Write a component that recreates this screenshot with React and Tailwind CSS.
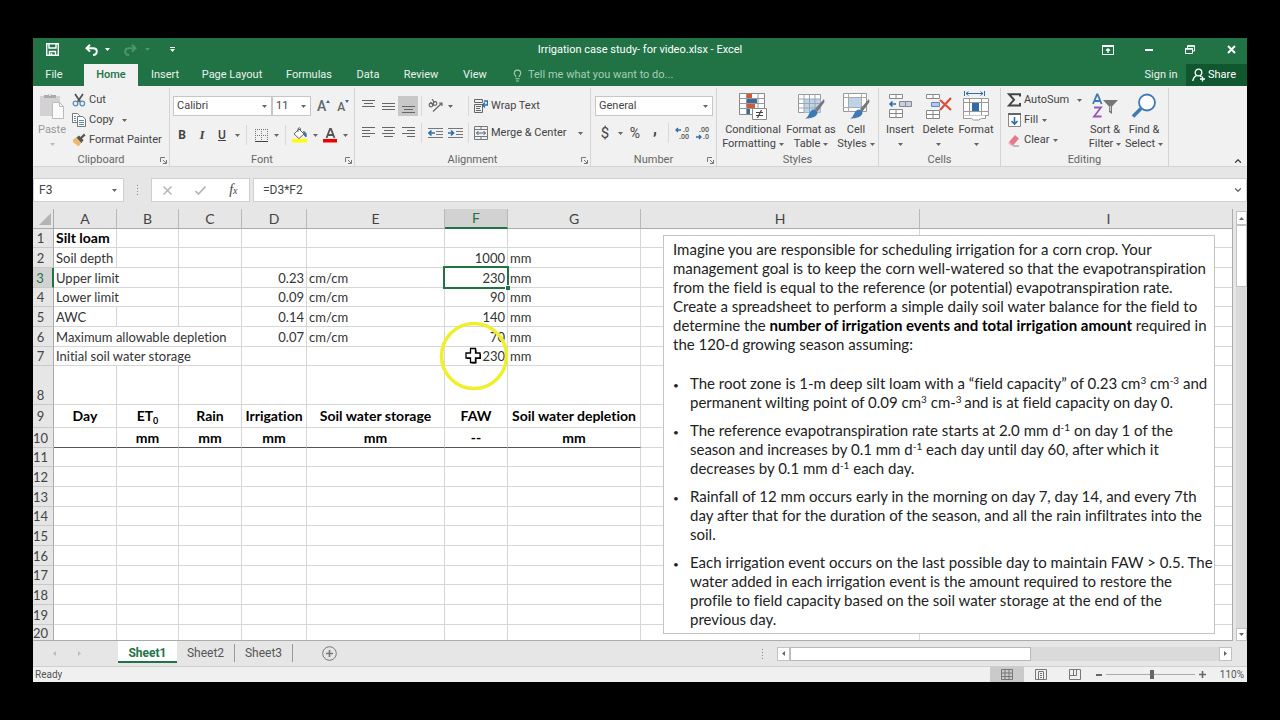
import { ChevronUp, ChevronDown, Lightbulb } from 'lucide-react';

const UI_FONT = "font-['Roboto','Noto_Sans',sans-serif]";
const CELL_FONT = "font-['Lato',sans-serif] [font-variant-ligatures:none]";

function Caret({ className = 'text-[#666]' }) {
  return (
    <svg width="5" height="3" viewBox="0 0 5 3" className={`shrink-0 ${className}`}>
      <path d="M0 0h5L2.5 3z" fill="currentColor" />
    </svg>
  );
}

function Launcher() {
  return (
    <svg width="7" height="7" viewBox="0 0 7 7" fill="none" stroke="#777">
      <path d="M.5 5V.5H5M3 3l3 3M6.500 3v3.500H3" />
    </svg>
  );
}

/* ---------- title bar ---------- */

function SaveIcon() {
  return (
    <svg width="13" height="13" viewBox="0 0 13 13" fill="none" stroke="#fff" strokeWidth="1.4">
      <path d="M.7.7h11.600v11.600H.7zM3 .7v4.300h7V.7M3.500 12V8.500h6V12" />
      <path d="M5.500 10v2" />
    </svg>
  );
}

function UndoIcon() {
  return (
    <svg width="13" height="12" viewBox="0 0 13 12" fill="none" stroke="currentColor" strokeWidth="2">
      <path d="M5 .8 1.500 4.200 5 7.600M1.800 4.200H8c2.500 0 3.800 1.300 3.800 3.200S10.500 10.800 8 11" />
    </svg>
  );
}

function TitleBar() {
  return (
    <div className="grid h-[26px] grid-cols-[1fr_auto_1fr] items-center pb-[3px] text-white">
      <div className="flex h-5 items-center pl-[13px]">
        <button aria-label="Save"><SaveIcon /></button>
        <button aria-label="Undo" className="ml-[26px] flex items-center gap-[7px]">
          <UndoIcon />
          <Caret className="text-white" />
        </button>
        <button aria-label="Redo" className="ml-[14px] flex items-center gap-[8px] text-[#4f946b]">
          <span className="-scale-x-100"><UndoIcon /></span>
          <Caret className="text-[#4f946b]" />
        </button>
        <button aria-label="Customize Quick Access Toolbar" className="ml-5 flex flex-col items-center gap-px">
          <span className="h-px w-[5px] bg-white" />
          <Caret className="text-white" />
        </button>
      </div>
      <h1 className="text-[11px]/[16px]">Irrigation case study- for video.xlsx - Excel</h1>
      <div className="flex h-5 items-center justify-end gap-[9px]">
        <button aria-label="Ribbon Display Options" className="flex w-8 justify-center">
          <svg width="12" height="10" viewBox="0 0 12 10" fill="none" stroke="#fff">
            <path d="M.5 1.500h11v8H.5z" />
            <path d="M0 1h12" strokeWidth="2" />
            <path d="M6 4v4M4 5.500 6 3.800l2 1.700" strokeWidth="1.300" />
          </svg>
        </button>
        <button aria-label="Minimize" className="flex w-8 justify-center">
          <span className="h-[2px] w-2 bg-white" />
        </button>
        <button aria-label="Restore" className="flex w-8 justify-center">
          <svg width="10" height="9" viewBox="0 0 10 9" fill="none" stroke="#fff">
            <path d="M2.500 3V1h7v5H7.500M.5 3.500h7v5h-7z" />
            <path d="M2 1h8M0 4h8" strokeWidth="1.600" />
          </svg>
        </button>
        <button aria-label="Close" className="flex w-8 justify-center">
          <svg width="9" height="9" viewBox="0 0 9 9" stroke="#fff" strokeWidth="2">
            <path d="m1 1 7 7M8 1 1 8" />
          </svg>
        </button>
      </div>
    </div>
  );
}

function TabBar() {
  return (
    <div className="flex h-[22px] items-stretch text-[11px]/[16px] text-[#e9f2ec]">
      <button className="mr-[9px] w-[42px]">File</button>
      <button className="w-[54px] bg-[#f1f1f1] font-medium text-[#217346]">Home</button>
      <button className="w-[54px]">Insert</button>
      <button className="w-20">Page Layout</button>
      <button className="w-[74px]">Formulas</button>
      <button className="w-11">Data</button>
      <button className="w-[62px]">Review</button>
      <button className="w-[46px]">View</button>
      <label className="ml-[13px] flex flex-1 items-center gap-1 text-[#a5cdb5]">
        <Lightbulb size={13} />
        <input
          aria-label="Tell me what you want to do"
          placeholder="Tell me what you want to do..."
          className="w-44 bg-transparent outline-none placeholder:text-[#a5cdb5]"
        />
      </label>
      <button className="w-[50px]">Sign in</button>
      <button className="flex w-[61px] items-center gap-[2px] bg-[#10562f] pl-[6px] text-white">
        <svg width="14" height="14" viewBox="0 0 14 14" fill="none" stroke="#fff" strokeWidth="1.300">
          <circle cx="6.500" cy="4.500" r="3.300" />
          <path d="M4.500 7.500C2.500 8.500 1.200 10 .8 13M8 8l1.500 1M10.500 8.500v5M8 11h5" />
        </svg>
        Share
      </button>
    </div>
  );
}

/* ---------- ribbon icons ---------- */

function PasteIcon() {
  return (
    <svg width="26" height="28" viewBox="0 0 26 28">
      <path d="M1 4h20v20H1z" fill="#d3d1d3" />
      <path d="M5 6V3h4a2.500 2.500 0 0 1 4 0h4v3z" fill="#aaa" />
      <circle cx="11" cy="3" r="1" fill="#f1f1f1" />
      <path d="M13.500 10.500h7l4 4v12h-11z" fill="#fbfbfb" stroke="#bbb" />
      <path d="M20.500 10.500v4h4" fill="none" stroke="#bbb" />
    </svg>
  );
}

function CutIcon() {
  return (
    <svg width="14" height="14" viewBox="0 0 14 14" fill="none">
      <path d="M3 1l5.500 8M11 1 5.500 9" stroke="#555" strokeWidth="1.800" />
      <circle cx="3.500" cy="10.500" r="2.300" stroke="#5a8fbd" strokeWidth="1.300" />
      <circle cx="10.300" cy="10.500" r="2.300" stroke="#5a8fbd" strokeWidth="1.300" />
    </svg>
  );
}

function CopyIcon() {
  return (
    <svg width="14" height="14" viewBox="0 0 14 14" fill="#fff" stroke="#777">
      <path d="M.5.500h5l2 2v7h-7z" />
      <path d="M2 3.500h2M2 5.500h2M2 7.500h2" stroke="#5a8fbd" />
      <path d="M5.500 3.500h5l3 2.500v7.500h-8z" />
      <path d="M7 7.500h5M7 9.500h5M7 11.500h5" stroke="#5a8fbd" />
    </svg>
  );
}

function PainterIcon() {
  return (
    <svg width="14" height="14" viewBox="0 0 14 14">
      <path d="M1 6.500 5 4l5 5-3.500 4.500L1 9z" fill="#e9b872" />
      <path d="m4.500 4.500 2.500-2 1.500 1.500L12 .5l1.500 2-3.500 3 1.500 1.500-2 3z" fill="#555" />
    </svg>
  );
}

function BordersIcon() {
  return (
    <svg width="13" height="13" viewBox="0 0 13 13" fill="none" stroke="#777">
      <path d="M0 .5h13M0 6.500h13M.5 0v12M6.500 0v12M12.500 0v12" strokeDasharray="1 1" />
      <path d="M0 12.500h13" stroke="#444" />
    </svg>
  );
}

function FillColorIcon() {
  return (
    <svg width="16" height="16" viewBox="0 0 16 16">
      <path d="m2 7 5-5 5 5-5 4.500z" fill="#fff" stroke="#666" />
      <path d="M6 5V1.500q1.500-1.500 2.500 0V4" fill="none" stroke="#666" />
      <path d="M11.500 4.500q3.500 1 2.500 5.500-2-1-1.500-3z" fill="#3f6fa3" stroke="#3f6fa3" />
      <path d="M0 12h15v3.500H0z" fill="#ff0" />
    </svg>
  );
}

function FontColorIcon() {
  return (
    <svg width="15" height="16" viewBox="0 0 15 16">
      <path d="m3.500 11 3.500-9h1l3.500 9M5 8h5" fill="none" stroke="#555" strokeWidth="1.800" />
      <path d="M0 12h14v3.500H0z" fill="#e00" />
    </svg>
  );
}

// each entry in rows is [x, width] of one text line in a 13px wide paragraph
function LinesIcon({ rows, top = 1, step = 3 }) {
  return (
    <svg width="13" height="14" viewBox="0 0 13 14" fill="#666">
      {rows.map(([x, w], i) => (
        <rect key={i} x={x} y={top + i * step} width={w} height="1" />
      ))}
    </svg>
  );
}

function IndentIcon({ increase }) {
  return (
    <svg width="15" height="13" viewBox="0 0 15 13" fill="none">
      <path d="M0 1.500h15M8 4.500h7M8 7.500h7M0 10.500h15" stroke="#777" />
      <path d={increase ? 'M0 6h5M3 3.500 5.500 6 3 8.500' : 'M1 6h6M3.500 3.500 1 6l2.500 2.500'} stroke="#2e6ea8" strokeWidth="1.600" />
    </svg>
  );
}

function OrientationIcon() {
  return (
    <svg width="15" height="14" viewBox="0 0 15 14" fill="none" stroke="#666" strokeWidth="1.200">
      <circle cx="3" cy="6" r="1.800" />
      <path d="m2.500 3 3 3.800" />
      <circle cx="7" cy="4.500" r="1.800" />
      <path d="m4 0 2.500 3.500M5 12.500l9-8.500M14 7V4h-3" />
    </svg>
  );
}

function WrapIcon() {
  return (
    <svg width="14" height="15" viewBox="0 0 14 15" fill="none" stroke="#666">
      <path d="M.5.500h8v3h-8zM.5 5.500h8v8h-8z" />
      <path d="M2 7.500h5M2 9.500h4M2 11.500h5" />
      <path d="M10 2h3.500v4H9M11 3.500 8.500 6 11 8.500" stroke="#2e6ea8" strokeWidth="1.300" />
    </svg>
  );
}

function MergeIcon() {
  return (
    <svg width="14" height="14" viewBox="0 0 14 14" fill="none" stroke="#777">
      <path d="M.5.500h13v13H.5zM.5 3.500h13M.5 10.500h13M7 .5v3M7 10.500v3" />
      <path d="M2.500 7h9M4.500 5l-2 2 2 2M9.500 5l2 2-2 2" stroke="#41617f" />
    </svg>
  );
}

function DecimalIcon({ increase }) {
  return (
    <svg width="15" height="14" viewBox="0 0 15 14" className="font-['Open_Sans',sans-serif] text-[7px] font-semibold">
      <text x={increase ? 8 : 4} y="6" fill="#555">{increase ? '.0' : '.00'}</text>
      <text x={increase ? 4 : 8} y="13" fill="#555">{increase ? '.00' : '.0'}</text>
      <path
        d={increase ? 'M1 4h5M3 2 1 4l2 2' : 'M1 11h5M4 9l2 2-2 2'}
        fill="none"
        stroke="#2e6ea8"
        strokeWidth="1.300"
      />
    </svg>
  );
}

function CondIcon() {
  return (
    <svg width="28" height="28" viewBox="0 0 28 28">
      <path d="M.5 1.500h25v21H.5z" fill="#fff" stroke="#888" />
      <path d="M.5 6.500h25M.5 11.500h25M.5 16.500h25M7.500 1.500v21M19 1.500v21" stroke="#999" fill="none" />
      <path d="M8 2h5v4H8zM8 12h8v4H8z" fill="#d2583a" />
      <path d="M8 7h10v4H8zM8 17h3v5H8z" fill="#3e6b9c" />
      <path d="M13.500 16.500h14v11h-14z" fill="#fff" stroke="#888" />
      <path d="M17 20.500h7M17 23.500h7M18.500 26l4-8" stroke="#444" strokeWidth="1.200" fill="none" />
    </svg>
  );
}

function Brush() {
  return (
    <>
      <path d="m27 7-9 10 2.500 2.500L27.500 10z" fill="#777" />
      <path d="M16.500 17.500q4 0 4 4-2 5-12.500 5 3-1.500 4-4.500 1.500-4 4.500-4.500z" fill="#3e7ab5" />
    </>
  );
}

function FormatTableIcon() {
  return (
    <svg width="28" height="28" viewBox="0 0 28 28">
      <path d="M1.500 2.500h22v18h-22z" fill="#fff" stroke="#999" />
      <path d="M7 7h16.500v13.500H7z" fill="#bcd3e8" />
      <path d="M1.500 7h22M1.500 11.500h22M1.500 16h22M7 2.500v18M12.500 2.500v18M18 2.500v18" stroke="#9aa7b3" fill="none" />
      <Brush />
    </svg>
  );
}

function CellStylesIcon() {
  return (
    <svg width="28" height="28" viewBox="0 0 28 28">
      <path d="M1.500 1.500h23v18h-23z" fill="#fff" stroke="#999" />
      <path d="M1.500 5.500h23M1.500 15.500h23M6.500 1.500v18M19.500 1.500v18" stroke="#aaa" fill="none" />
      <path d="M7 6h12v9H7z" fill="#bcd3e8" />
      <Brush />
    </svg>
  );
}

function InsertIcon() {
  return (
    <svg width="26" height="28" viewBox="0 0 26 28" fill="#fff" stroke="#888">
      <path d="M2.500 2.500h13v4h-13zM9 2.500v4M2.500 17.500h13v8h-13zM9 17.500v8M2.500 21.500h13" />
      <path d="M12.500 9.500h12v5h-12zM18.500 9.500v5" fill="#c5cfe3" />
      <path d="M3 12h6M5.500 9.500 3 12l2.500 2.500" stroke="#2e6ea8" strokeWidth="1.600" fill="none" />
    </svg>
  );
}

function DeleteIcon() {
  return (
    <svg width="28" height="28" viewBox="0 0 28 28" fill="#fff" stroke="#888">
      <path d="M2.500 2.500h13v4h-13zM9 2.500v4M2.500 18.500h13v8h-13zM9 18.500v8M2.500 22.500h13" />
      <path d="M7.500 10.500h8v4h-8z" fill="#b6c8e6" stroke="#6787b5" />
      <path d="m16 8 11 10M27 6 16 18" stroke="#d8513a" strokeWidth="2.200" />
    </svg>
  );
}

function FormatIcon() {
  return (
    <svg width="28" height="30" viewBox="0 0 28 30" fill="#fff" stroke="#999">
      <path d="M1.500 7.500h25v17h-25z" />
      <path d="M1.500 11.500h25M1.500 20.500h25M7.500 7.500v17M19.500 7.500v17" />
      <path d="M10 12h7v8h-7z" fill="#2e6ea8" stroke="none" />
      <path d="M1.500 24.500v3h8l2 1.500h5l3-1.500h4v-3" />
      <path d="M2.500 0v5M22.500 0v5M4 2.500h17M6.500.5l-2.500 2 2.500 2M18.500.5l2.500 2-2.500 2" stroke="#2e6ea8" fill="none" />
    </svg>
  );
}

function SigmaIcon() {
  return (
    <svg width="14" height="14" viewBox="0 0 14 14" fill="none" stroke="#444" strokeWidth="2">
      <path d="M13 3.500V1.200H2l5 5.600-5 5.600h11v-2.300" />
    </svg>
  );
}

function FillIcon() {
  return (
    <svg width="13" height="14" viewBox="0 0 13 14" fill="#fff" stroke="#888">
      <path d="M.5 1.500h12v12H.5z" />
      <path d="M0 1h13" stroke="#666" strokeWidth="2" />
      <path d="M6.500 4v7M3.500 8l3 3 3-3" stroke="#2e6ea8" strokeWidth="1.600" fill="none" />
    </svg>
  );
}

function ClearIcon() {
  return (
    <svg width="14" height="13" viewBox="0 0 14 13">
      <path d="m2 8 6-7 4 3.500-6 7H4z" fill="#e8798c" />
      <path d="m2 8 4 3.500L4.500 12 1 9.500z" fill="#f4b9c3" />
      <path d="M6 12h6" stroke="#888" />
    </svg>
  );
}

function SortIcon() {
  return (
    <svg width="28" height="28" viewBox="0 0 28 28" fill="none">
      <path d="m2 12 4-9.500h.6l4 9.500M3.500 9h6" stroke="#3e7ab5" strokeWidth="1.800" />
      <path d="M3 15.500h7L3 24.500h7.500" stroke="#9659b5" strokeWidth="1.800" />
      <path d="M12 8h15l-6 6.500V22l-3-2v-5.500z" fill="#777" />
      <path d="M19.300 14v5" stroke="#ddd" />
    </svg>
  );
}

function FindIcon() {
  return (
    <svg width="26" height="26" viewBox="0 0 26 26" fill="none" stroke="#3e7ab5">
      <circle cx="16" cy="9.500" r="8" fill="#fff" strokeWidth="1.800" />
      <path d="M10 15.500 2 23.500" strokeWidth="3.500" />
    </svg>
  );
}

/* ---------- ribbon ---------- */

function Group({ label, width, launcher, children }) {
  return (
    <section className={`flex shrink-0 flex-col border-r border-[#d4d4d4] ${width}`}>
      <div className="h-[65px] px-[2px]">{children}</div>
      <div className="grid h-[13px] grid-cols-[12px_1fr_12px] items-center text-[#666]">
        <span className="col-start-2 text-center">{label}</span>
        {launcher && <button aria-label={`${label} settings`} className="flex justify-center"><Launcher /></button>}
      </div>
    </section>
  );
}

function BigButton({ icon, lines, width, disabled, caretBelow }) {
  return (
    <button className={`flex shrink-0 flex-col items-center leading-[14px] ${width} ${disabled ? 'text-[#999]' : ''}`}>
      <span className="flex h-[35px] items-center justify-center">{icon}</span>
      <span className="whitespace-nowrap">{lines[0]}</span>
      <span className="flex h-[14px] items-center gap-[3px] whitespace-nowrap">
        {!caretBelow && lines[1]}
        <Caret className={disabled ? 'text-[#bbb]' : 'text-[#666]'} />
      </span>
    </button>
  );
}

function SmallButton({ icon, label, caret, gap = 'gap-1' }) {
  return (
    <button className={`flex h-5 items-center whitespace-nowrap ${gap}`}>
      <span className="flex items-center gap-[3px]">
        <span className="flex w-[14px] justify-center">{icon}</span>
        {label}
      </span>
      {caret && <Caret />}
    </button>
  );
}

function Tool({ label, children, active }) {
  return (
    <button aria-label={label} className={`flex h-5 w-5 shrink-0 items-center justify-center ${active ? 'bg-[#c8c8c8]' : ''}`}>
      {children}
    </button>
  );
}

function CaretButton({ label }) {
  return (
    <button aria-label={label} className="flex h-5 w-[10px] shrink-0 items-center justify-center">
      <Caret />
    </button>
  );
}

function Divider({ className = 'mx-1' }) {
  return <span className={`h-5 w-px shrink-0 bg-[#d9d9d9] ${className}`} />;
}

function Combo({ label, value, width }) {
  return (
    <span className={`relative h-5 shrink-0 border border-[#c6c6c6] bg-white ${width}`}>
      <select aria-label={label} className="block h-full w-full appearance-none pl-[3px] outline-none">
        <option>{value}</option>
      </select>
      <span className="pointer-events-none absolute top-2 right-1"><Caret /></span>
    </span>
  );
}

function Ribbon() {
  return (
    <div className="flex h-[81px] border-b border-[#d4d4d4] bg-[#f1f1f1] pt-[2px] text-[11px]/[14px] text-[#444]">
      <Group label="Clipboard" width="w-[137px]" launcher>
        <div className="flex">
          <BigButton icon={<PasteIcon />} lines={['Paste']} width="w-[34px]" disabled caretBelow />
          <div className="ml-[3px] pt-[2px]">
            <SmallButton icon={<CutIcon />} label="Cut" />
            <SmallButton icon={<CopyIcon />} label="Copy" caret gap="gap-2" />
            <SmallButton icon={<PainterIcon />} label="Format Painter" />
          </div>
        </div>
      </Group>
      <Group label="Font" width="w-[185px]" launcher>
        <div className="flex pt-2 pl-px">
          <Combo label="Font name" value="Calibri" width="w-[99px]" />
          <Combo label="Font size" value="11" width="w-[39px]" />
          <button aria-label="Increase font size" className="ml-[6px] flex text-[14px]/[20px] font-medium text-[#666]">
            A
            <svg width="4" height="3" viewBox="0 0 4 3" className="mt-1"><path d="M0 3 2 0l2 3z" fill="#2e6ea8" /></svg>
          </button>
          <button aria-label="Decrease font size" className="ml-[7px] flex text-[12px]/[22px] font-medium text-[#666]">
            A
            <svg width="4" height="3" viewBox="0 0 4 3" className="mt-1"><path d="M0 0h4L2 3z" fill="#2e6ea8" /></svg>
          </button>
        </div>
        <div className="flex items-center pt-[7px]">
          <Tool label="Bold"><b className="text-[12px]">B</b></Tool>
          <Tool label="Italic"><i className="font-['Liberation_Serif',serif] text-[13px] font-bold">I</i></Tool>
          <Tool label="Underline"><span className="text-[12px] font-medium underline">U</span></Tool>
          <CaretButton label="Underline style" />
          <Divider />
          <Tool label="Borders"><BordersIcon /></Tool>
          <CaretButton label="Border style" />
          <Divider />
          <Tool label="Fill color"><FillColorIcon /></Tool>
          <CaretButton label="Fill colors" />
          <Tool label="Font color"><FontColorIcon /></Tool>
          <CaretButton label="Font colors" />
        </div>
      </Group>
      <Group label="Alignment" width="w-[236px]" launcher>
        <div className="flex items-center pt-2 pl-px">
          <Tool label="Top align"><LinesIcon rows={[[0, 13], [2, 9], [0, 13]]} /></Tool>
          <Tool label="Middle align"><LinesIcon rows={[[0, 13], [0, 13], [0, 13]]} top={4} /></Tool>
          <Tool label="Bottom align" active><LinesIcon rows={[[0, 13], [2, 9], [0, 13]]} top={7} /></Tool>
          <Divider className="mx-[3px]" />
          <Tool label="Orientation"><OrientationIcon /></Tool>
          <CaretButton label="Orientation menu" />
          <Divider className="mr-[5px] ml-[13px]" />
          <SmallButton icon={<WrapIcon />} label="Wrap Text" />
        </div>
        <div className="flex items-center pt-[7px] pl-px">
          <Tool label="Align left"><LinesIcon rows={[[0, 13], [0, 8], [0, 13], [0, 8]]} /></Tool>
          <Tool label="Center"><LinesIcon rows={[[0, 13], [2, 9], [0, 13], [2, 9]]} /></Tool>
          <Tool label="Align right"><LinesIcon rows={[[0, 13], [5, 8], [0, 13], [5, 8]]} /></Tool>
          <Divider className="mx-[3px]" />
          <Tool label="Decrease indent"><IndentIcon /></Tool>
          <Tool label="Increase indent"><IndentIcon increase /></Tool>
          <Divider className="mr-[5px] ml-[3px]" />
          <SmallButton icon={<MergeIcon />} label="Merge & Center" caret gap="gap-[11px]" />
        </div>
      </Group>
      <Group label="Number" width="w-[126px]" launcher>
        <div className="flex pt-2 pl-[2px]">
          <Combo label="Number format" value="General" width="w-[118px]" />
        </div>
        <div className="flex items-center pt-[7px] pl-[2px]">
          <Tool label="Currency"><span className="text-[15px]">$</span></Tool>
          <CaretButton label="Currency menu" />
          <Tool label="Percent"><span className="text-[14px]">%</span></Tool>
          <Tool label="Comma style"><b className="pb-2 text-[16px]/[8px]">,</b></Tool>
          <Divider className="mx-[3px]" />
          <Tool label="Increase decimal"><DecimalIcon increase /></Tool>
          <Tool label="Decrease decimal"><DecimalIcon /></Tool>
        </div>
      </Group>
      <Group label="Styles" width="w-[162px]">
        <div className="flex">
          <BigButton icon={<CondIcon />} lines={['Conditional', 'Formatting']} width="w-[68px]" />
          <BigButton icon={<FormatTableIcon />} lines={['Format as', 'Table']} width="w-[48px]" />
          <BigButton icon={<CellStylesIcon />} lines={['Cell', 'Styles']} width="w-[42px]" />
        </div>
      </Group>
      <Group label="Cells" width="w-[122px]">
        <div className="flex">
          <BigButton icon={<InsertIcon />} lines={['Insert']} width="w-[38px]" caretBelow />
          <BigButton icon={<DeleteIcon />} lines={['Delete']} width="w-[38px]" caretBelow />
          <BigButton icon={<FormatIcon />} lines={['Format']} width="w-[38px]" caretBelow />
        </div>
      </Group>
      <Group label="Editing" width="w-[168px]">
        <div className="flex pl-1">
          <div className="w-[79px] pt-[2px]">
            <SmallButton icon={<SigmaIcon />} label="AutoSum" caret gap="gap-2" />
            <SmallButton icon={<FillIcon />} label="Fill" caret />
            <SmallButton icon={<ClearIcon />} label="Clear" caret />
          </div>
          <BigButton icon={<SortIcon />} lines={['Sort &', 'Filter']} width="w-[38px]" />
          <BigButton icon={<FindIcon />} lines={['Find &', 'Select']} width="w-[40px]" />
        </div>
      </Group>
      <div className="flex flex-1 items-end justify-end pr-1">
        <button aria-label="Collapse ribbon"><ChevronUp size={10} strokeWidth={3} /></button>
      </div>
    </div>
  );
}

function Dots() {
  return (
    <span className="flex flex-col gap-[2px]">
      <span className="h-px w-px bg-[#888]" />
      <span className="h-px w-px bg-[#888]" />
      <span className="h-px w-px bg-[#888]" />
      <span className="h-px w-px bg-[#888]" />
    </span>
  );
}

function FormulaBar() {
  return (
    <div className="flex h-[42px] items-center pt-1 text-[12px]/[16px] text-[#444]">
      <div className="flex h-6 w-[91px] items-center border border-[#d0d0d0] bg-white pr-[6px] pl-[5px]">
        <input aria-label="Name box" defaultValue="F3" className="w-full outline-none" />
        <Caret />
      </div>
      <span className="flex w-[27px] justify-center"><Dots /></span>
      <div className="flex h-6 w-[99px] items-center justify-around border border-[#d0d0d0] bg-white">
        <button aria-label="Cancel">
          <svg width="9" height="9" viewBox="0 0 9 9" stroke="#b5b5b5" strokeWidth="1.500"><path d="m.5.500 8 8M8.500.500l-8 8" /></svg>
        </button>
        <button aria-label="Enter">
          <svg width="11" height="9" viewBox="0 0 11 9" fill="none" stroke="#b5b5b5" strokeWidth="1.700"><path d="m.5 5 3 3L10.500.500" /></svg>
        </button>
        <button aria-label="Insert function" className="font-['Liberation_Serif',serif] text-[14px] italic">
          f<span className="text-[10px]">x</span>
        </button>
      </div>
      <div className="ml-[3px] flex h-6 flex-1 items-center border border-[#d0d0d0] bg-white pr-[3px] pl-[9px]">
        <input aria-label="Formula" defaultValue="=D3*F2" className="flex-1 outline-none" />
        <ChevronDown size={10} strokeWidth={3} className="text-[#666]" />
      </div>
    </div>
  );
}

/* ---------- sheet ---------- */

const COLUMNS = [
  { name: 'A', width: 'w-[63px]' },
  { name: 'B', width: 'w-[62px]' },
  { name: 'C', width: 'w-[63px]' },
  { name: 'D', width: 'w-[65px]' },
  { name: 'E', width: 'w-[138px]' },
  { name: 'F', width: 'w-[63px]' },
  { name: 'G', width: 'w-[133px]' },
  { name: 'H', width: 'w-[279px]' },
  { name: 'I', width: '' },
];

const H19 = 'h-[19px]';
const H20 = 'h-[20px]';

// long labels spill over the empty cells on their right, so they carry a span
const ROWS = [
  { height: H19, cells: { A: { text: 'Silt loam', bold: true } } },
  { height: H20, cells: { A: { text: 'Soil depth' }, F: { text: '1000', align: 'text-right' }, G: { text: 'mm' } } },
  { height: H20, cells: { A: { text: 'Upper limit', span: 2 }, D: { text: '0.23', align: 'text-right' }, E: { text: 'cm/cm' }, F: { text: '230', align: 'text-right', selected: true }, G: { text: 'mm' } } },
  { height: H19, cells: { A: { text: 'Lower limit', span: 2 }, D: { text: '0.09', align: 'text-right' }, E: { text: 'cm/cm' }, F: { text: '90', align: 'text-right' }, G: { text: 'mm' } } },
  { height: H20, cells: { A: { text: 'AWC' }, D: { text: '0.14', align: 'text-right' }, E: { text: 'cm/cm' }, F: { text: '140', align: 'text-right' }, G: { text: 'mm' } } },
  { height: H20, cells: { A: { text: 'Maximum allowable depletion', span: 3 }, D: { text: '0.07', align: 'text-right' }, E: { text: 'cm/cm' }, F: { text: '70', align: 'text-right' }, G: { text: 'mm' } } },
  { height: H19, cells: { A: { text: 'Initial soil water storage', span: 3 }, F: { text: '230', align: 'text-right' }, G: { text: 'mm' } } },
  { height: 'h-[39px]', cells: {} },
  {
    height: 'h-[23px]',
    middle: true,
    cells: {
      A: { text: 'Day', bold: true, align: 'text-center' },
      B: { text: <>ET<sub className="bottom-[-3px] text-[9px]">0</sub></>, bold: true, align: 'text-center' },
      C: { text: 'Rain', bold: true, align: 'text-center' },
      D: { text: 'Irrigation', bold: true, align: 'text-center' },
      E: { text: 'Soil water storage', bold: true, align: 'text-center' },
      F: { text: 'FAW', bold: true, align: 'text-center' },
      G: { text: 'Soil water depletion', bold: true, align: 'text-center' },
    },
  },
  {
    height: H20,
    ruled: true,
    cells: {
      B: { text: 'mm', bold: true, align: 'text-center' },
      C: { text: 'mm', bold: true, align: 'text-center' },
      D: { text: 'mm', bold: true, align: 'text-center' },
      E: { text: 'mm', bold: true, align: 'text-center' },
      F: { text: '--', bold: true, align: 'text-center' },
      G: { text: 'mm', bold: true, align: 'text-center' },
    },
  },
  ...[H19, H20, H20, H19, H20, H20, H19, H20, H20].map((height) => ({ height, cells: {} })),
  { height: 'h-4 leading-[16px]', cells: {} },
];

function Row({ row, number }) {
  const valign = row.middle ? 'align-middle' : 'align-bottom';
  const tds = [];
  for (let i = 0; i < COLUMNS.length; i++) {
    const { name } = COLUMNS[i];
    const cell = row.cells[name] || {};
    const ruled = row.ruled && i < 7;
    tds.push(
      <td
        key={name}
        colSpan={cell.span}
        className={`border-r border-b border-r-[#d6d6d6] px-[2px] py-0 whitespace-nowrap ${valign} ${ruled ? 'border-b-[#555]' : 'border-b-[#d6d6d6]'} ${cell.bold ? 'text-[14px] font-bold text-black' : ''} ${cell.selected ? 'relative' : ''} ${cell.align || ''}`}
      >
        {cell.text}
        {cell.selected && (
          <span className="absolute -top-[2px] -right-[2px] -bottom-[2px] -left-[2px] border-2 border-[#217346]">
            <span className="absolute -right-[3px] -bottom-[3px] h-[5px] w-[5px] border-t border-l border-white bg-[#217346]" />
          </span>
        )}
      </td>
    );
    if (cell.span) i += cell.span - 1;
  }
  const current = number === 3;
  return (
    <tr className={row.height}>
      <th
        scope="row"
        className={`border-r border-b border-b-[#c8c8c8] py-0 pr-[5px] pl-0 text-center font-normal ${valign} ${current ? 'border-r-2 border-r-[#217346] bg-[#d2d2d2] text-[#217346]' : 'border-r-[#ababab] bg-[#e6e6e6] text-[#444]'}`}
      >
        {number}
      </th>
      {tds}
    </tr>
  );
}

const BULLET = "before:-ml-[17px] before:inline-block before:w-[17px] before:text-[10px]/[8px] before:content-['•']";

function TaskNote() {
  return (
    <div className={`absolute top-[26px] left-[630px] w-[552px] border border-[#c4c4c4] bg-white px-[9px] py-1 text-[15px]/[19px] whitespace-nowrap text-[#222] ${CELL_FONT}`}>
      <p>
        Imagine you are responsible for scheduling irrigation for a corn crop. Your<br />
        management goal is to keep the corn well-watered so that the evapotranspiration<br />
        from the field is equal to the reference (or potential) evapotranspiration rate.<br />
        Create a spreadsheet to perform a simple daily soil water balance for the field to<br />
        determine the <b className="text-black">number of irrigation events and total irrigation amount</b> required in<br />
        the 120-d growing season assuming:
      </p>
      <ul className="mt-5 space-y-[9px] pl-[17px] [&_sup]:text-[10px]">
        <li className={BULLET}>
          The root zone is 1-m deep silt loam with a “field capacity” of 0.23 cm<sup>3</sup> cm<sup>-3</sup> and<br />
          permanent wilting point of 0.09 cm<sup>3</sup> cm-<sup>3 </sup>and is at field capacity on day 0.
        </li>
        <li className={BULLET}>
          The reference evapotranspiration rate starts at 2.0 mm d<sup>-1</sup> on day 1 of the<br />
          season and increases by 0.1 mm d<sup>-1</sup> each day until day 60, after which it<br />
          decreases by 0.1 mm d<sup>-1</sup> each day.
        </li>
        <li className={BULLET}>
          Rainfall of 12 mm occurs early in the morning on day 7, day 14, and every 7th<br />
          day after that for the duration of the season, and all the rain infiltrates into the<br />
          soil.
        </li>
        <li className={BULLET}>
          Each irrigation event occurs on the last possible day to maintain FAW &gt; 0.5. The<br />
          water added in each irrigation event is the amount required to restore the<br />
          profile to field capacity based on the soil water storage at the end of the<br />
          previous day.
        </li>
      </ul>
    </div>
  );
}

function Pointer() {
  return (
    <svg width="70" height="70" viewBox="0 0 70 70" fill="none" className="pointer-events-none absolute top-[112px] left-[406px]">
      <circle cx="35" cy="35" r="32.500" stroke="#eef02c" strokeWidth="3.500" />
      <path d="M32.500 28.500h5v4.500h4.500v5h-4.500v4.500h-5v-4.500H28v-5h4.500z" fill="#000" />
      <path d="M31.500 27.500h5v4.500h4.500v5h-4.500v4.500h-5v-4.500H27v-5h4.500z" fill="#fff" stroke="#000" strokeWidth="1.300" />
    </svg>
  );
}

function Sheet() {
  return (
    <div className="flex h-[432px]">
      <div className="relative min-w-0 flex-1 overflow-hidden border-r border-b border-[#ababab] bg-white">
        <table className={`w-full min-w-[1265px] table-fixed border-separate border-spacing-0 text-[13px]/[18px] text-[#333] ${CELL_FONT}`}>
          <colgroup>
            <col className="w-[21px]" />
            {COLUMNS.map((c) => <col key={c.name} className={c.width} />)}
          </colgroup>
          <thead>
            <tr className="h-5 bg-[#e6e6e6] text-[14px]/[18px] text-[#444]">
              <td className="border-r border-b border-[#ababab] p-0 pl-[6px]">
                <svg width="12" height="12" viewBox="0 0 12 12"><path d="M12 0v12H0z" fill="#b4b4b4" /></svg>
              </td>
              {COLUMNS.map((c) => (
                <th
                  key={c.name}
                  scope="col"
                  className={`border-r border-b border-r-[#b8b8b8] p-0 font-normal ${c.name === 'F' ? 'border-b-2 border-b-[#217346] bg-[#d2d2d2] text-[#217346]' : 'border-b-[#ababab]'}`}
                >
                  {c.name}
                </th>
              ))}
            </tr>
          </thead>
          <tbody>
            {ROWS.map((row, i) => <Row key={i} row={row} number={i + 1} />)}
          </tbody>
        </table>
        <TaskNote />
        <Pointer />
      </div>
      <div className="flex w-[14px] shrink-0 flex-col bg-[#e6e6e6] pt-[2px] pl-[3px]">
        <button aria-label="Scroll up" className="flex h-[14px] items-center justify-center border border-[#c2c2c2] bg-white">
          <span className="rotate-180"><Caret /></span>
        </button>
        <div className="flex-1 bg-[#dadada]">
          <div className="h-[62px] border border-[#c2c2c2] bg-white" />
        </div>
        <button aria-label="Scroll down" className="flex h-[13px] items-center justify-center border border-[#c2c2c2] bg-white">
          <Caret />
        </button>
      </div>
    </div>
  );
}

function SheetTabs() {
  return (
    <div className="flex h-[25px] text-[12px]/[16px] text-[#555]">
      <div className="flex w-[85px] items-center gap-5 pl-[19px]">
        <button aria-label="Previous sheet"><span className="block rotate-90"><Caret className="text-[#bbb]" /></span></button>
        <button aria-label="Next sheet"><span className="block -rotate-90"><Caret className="text-[#bbb]" /></span></button>
      </div>
      <button className="h-[22px] w-[59px] border-b-2 border-[#217346] bg-white pt-[3px] font-bold text-[#217346]">Sheet1</button>
      <div className="flex h-6 items-center">
        <button className="h-[18px] w-[58px] border-r border-[#999]">Sheet2</button>
        <button className="h-[18px] w-[58px] border-r border-[#999]">Sheet3</button>
      </div>
      <button aria-label="New sheet" className="ml-[29px]">
        <svg width="15" height="15" viewBox="0 0 15 15" fill="none" stroke="#777">
          <circle cx="7.500" cy="7.500" r="6.800" />
          <path d="M7.500 4v7M4 7.500h7" strokeWidth="1.600" />
        </svg>
      </button>
      <div className="flex flex-1 items-center justify-end pr-[15px]">
        <Dots />
        <button aria-label="Scroll left" className="ml-[14px] flex h-[14px] w-[13px] items-center justify-center border border-[#c2c2c2] bg-white">
          <span className="rotate-90"><Caret /></span>
        </button>
        <div className="h-[14px] w-[429px] bg-[#dadada]">
          <div className="h-full w-[241px] border border-[#b8b8b8] bg-white" />
        </div>
        <button aria-label="Scroll right" className="flex h-[14px] w-[13px] items-center justify-center border border-[#c2c2c2] bg-white">
          <span className="-rotate-90"><Caret /></span>
        </button>
      </div>
    </div>
  );
}

function StatusBar() {
  return (
    <div className="flex h-4 items-center border-t border-[#cfcfcf] bg-[#f0f0f0] pr-[3px] pl-[2px] text-[10px]/[14px] text-[#555]">
      <span className="flex-1">Ready</span>
      <button aria-label="Normal view" className="flex h-[15px] w-[34px] items-center justify-center bg-[#cacaca]">
        <svg width="12" height="11" viewBox="0 0 12 11" fill="none" stroke="#777">
          <path d="M.5.500h11v10H.5zM.5 4h11M.5 7.500h11M4 .5v10M8 .5v10" />
        </svg>
      </button>
      <button aria-label="Page layout view" className="flex w-[34px] justify-center">
        <svg width="12" height="11" viewBox="0 0 12 11" fill="none" stroke="#777">
          <path d="M.5.500h11v10H.5zM3.500 2.500h5v8h-5zM5 4.500h2M5 6.500h2M5 8.500h2" />
        </svg>
      </button>
      <button aria-label="Page break view" className="flex w-[34px] justify-center">
        <svg width="12" height="11" viewBox="0 0 12 11" fill="none" stroke="#777">
          <path d="M.5.500h11v10H.5zM.5 6.500h7M4.500.500v6M7.500 .5v6" />
        </svg>
      </button>
      <button aria-label="Zoom out" className="ml-1 h-[2px] w-[6px] bg-[#666]" />
      <input
        type="range"
        aria-label="Zoom"
        min="10"
        max="210"
        defaultValue="114"
        className="mx-1 h-3 w-[89px] appearance-none bg-transparent [&::-webkit-slider-runnable-track]:h-px [&::-webkit-slider-runnable-track]:bg-[#aaa] [&::-webkit-slider-thumb]:-mt-1 [&::-webkit-slider-thumb]:h-[9px] [&::-webkit-slider-thumb]:w-1 [&::-webkit-slider-thumb]:appearance-none [&::-webkit-slider-thumb]:bg-[#666]"
      />
      <button aria-label="Zoom in">
        <svg width="7" height="7" viewBox="0 0 7 7" stroke="#666" strokeWidth="1.600"><path d="M3.500 0v7M0 3.500h7" /></svg>
      </button>
      <span className="w-[38px] text-right">110%</span>
    </div>
  );
}

export default function App() {
  return (
    <div className="min-h-screen bg-black px-[33px] py-[38px]">
      <main className={`flex flex-col bg-[#e6e6e6] ${UI_FONT}`}>
        <header className="bg-[#217346]">
          <TitleBar />
          <TabBar />
        </header>
        <Ribbon />
        <FormulaBar />
        <Sheet />
        <SheetTabs />
        <StatusBar />
      </main>
    </div>
  );
}
